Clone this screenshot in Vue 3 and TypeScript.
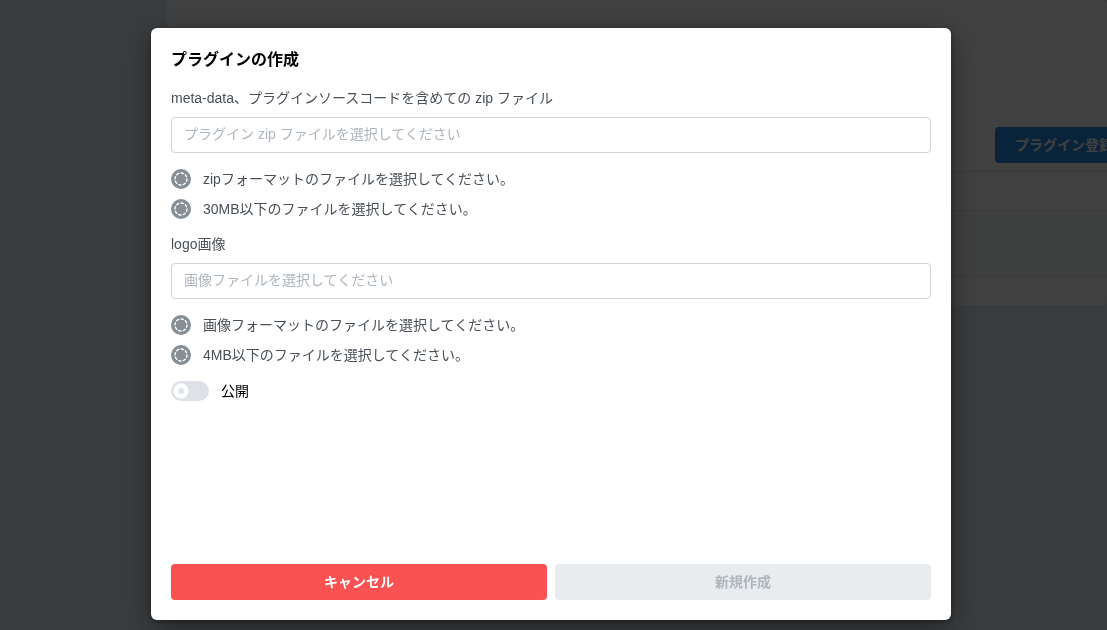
<script setup lang="ts">
import { ref } from 'vue'

interface FileField {
  id: string
  label: string
  placeholder: string
  rules: string[]
}

const fields: FileField[] = [
  {
    id: 'plugin-zip',
    label: 'meta-data、プラグインソースコードを含めての zip ファイル',
    placeholder: 'プラグイン zip ファイルを選択してください',
    rules: ['zipフォーマットのファイルを選択してください。', '30MB以下のファイルを選択してください。'],
  },
  {
    id: 'plugin-logo',
    label: 'logo画像',
    placeholder: '画像ファイルを選択してください',
    rules: ['画像フォーマットのファイルを選択してください。', '4MB以下のファイルを選択してください。'],
  },
]

const isPublic = ref(false)
</script>

<template>
  <div class="page">
    <main class="panel">
      <div class="toolbar">
        <button type="button" class="btn register">プラグイン登録</button>
      </div>
      <div class="row head"></div>
      <div class="row item"></div>
      <div class="row foot"></div>
    </main>
  </div>

  <div class="overlay">
    <form class="modal" role="dialog" aria-modal="true" aria-labelledby="modal-title" @submit.prevent>
      <h2 id="modal-title" class="title">プラグインの作成</h2>

      <section v-for="field in fields" :key="field.id" class="field">
        <label class="label" :for="field.id">{{ field.label }}</label>
        <input :id="field.id" class="input" type="text" readonly :placeholder="field.placeholder" />
        <ul class="rules">
          <li v-for="rule in field.rules" :key="rule" class="rule">
            <span class="rule-icon">
              <svg width="16" height="16" viewBox="0 0 24 24" fill="none" stroke="currentColor" stroke-width="2" stroke-linecap="round" stroke-linejoin="round" aria-hidden="true">
                <path d="M8.56 3.69a9 9 0 0 0-2.92 1.95" />
                <path d="M3.69 8.56a9 9 0 0 0-.69 3.44" />
                <path d="M3.69 15.44a9 9 0 0 0 1.95 2.92" />
                <path d="M8.56 20.31a9 9 0 0 0 3.44.69" />
                <path d="M15.44 20.31a9 9 0 0 0 2.92-1.95" />
                <path d="M20.31 15.44a9 9 0 0 0 .69-3.44" />
                <path d="M20.31 8.56a9 9 0 0 0-1.95-2.92" />
                <path d="M15.44 3.69a9 9 0 0 0-3.44-.69" />
              </svg>
            </span>
            <span>{{ rule }}</span>
          </li>
        </ul>
      </section>

      <label class="switch">
        <input v-model="isPublic" class="switch-input" type="checkbox" role="switch" />
        <span>公開</span>
      </label>

      <div class="actions">
        <button type="button" class="btn cancel">キャンセル</button>
        <button type="submit" class="btn create" disabled>新規作成</button>
      </div>
    </form>
  </div>
</template>

<style>
body {
  background: #e2eef6;
}
</style>

<style scoped>
.page,
.overlay {
  box-sizing: border-box;
  font-family: "Liberation Sans", "Noto Sans CJK JP", sans-serif;
  font-size: 14px;
  line-height: 20px;
}

.page {
  min-height: 100vh;
  padding-left: 167px;
  overflow: hidden;
}

.panel {
  background: #fff;
  border-radius: 4px;
}

.toolbar {
  display: flex;
  justify-content: flex-end;
  padding: 127px 0 8px;
  margin-right: -26px;
}

.row {
  border-top: 1px solid #dee2e6;
}

.head {
  height: 38px;
}

.item {
  height: 65px;
  background: #f8f9fa;
}

.foot {
  height: 28px;
}

.btn {
  height: 36px;
  padding: 0 20px;
  border: 0;
  border-radius: 4px;
  font: inherit;
  font-weight: 600;
  color: #fff;
  white-space: nowrap;
}

.register {
  background: #228be6;
}

.overlay {
  position: fixed;
  inset: 0;
  display: flex;
  align-items: flex-start;
  justify-content: center;
  padding: 28px 5px 10px 0;
  background: rgba(0, 0, 0, 0.75);
}

.modal {
  box-sizing: border-box;
  display: flex;
  flex-direction: column;
  width: 100%;
  max-width: 800px;
  height: 100%;
  padding: 20px;
  border-radius: 6px;
  background: #fff;
  color: #000;
  box-shadow: 0 2px 6px rgba(0, 0, 0, 0.3), 0 8px 28px rgba(0, 0, 0, 0.4);
}

.title {
  margin: 0 0 16px;
  font-size: 16px;
  line-height: 24px;
  font-weight: 700;
}

.field {
  display: flex;
  flex-direction: column;
  margin-bottom: 15px;
  color: #495057;
}

.label {
  margin-bottom: 8px;
  line-height: 21px;
}

.input {
  box-sizing: border-box;
  width: 100%;
  height: 36px;
  padding: 0 12px 2px;
  border: 1px solid #ced4da;
  border-radius: 4px;
  background: #fff;
  font: inherit;
  color: #000;
}

.input::placeholder {
  color: #adb5bd;
  opacity: 1;
}

.rules {
  display: flex;
  flex-direction: column;
  gap: 10px;
  margin: 16px 0 0;
  padding: 0;
  list-style: none;
}

.rule {
  display: flex;
  align-items: center;
  gap: 12px;
}

.rule-icon {
  display: flex;
  align-items: center;
  justify-content: center;
  width: 20px;
  height: 20px;
  border-radius: 50%;
  background: #868e96;
  color: #fff;
}

.switch {
  display: flex;
  align-items: center;
  align-self: flex-start;
  gap: 12px;
  line-height: 22px;
}

.switch-input {
  appearance: none;
  box-sizing: border-box;
  width: 38px;
  height: 20px;
  margin: 0;
  border-radius: 10px;
  background: radial-gradient(circle at 10px 10px, #dee2e6 2px, #fff 4px, #fff 7px, #dee2e6 8px);
}

.switch-input:checked {
  background: radial-gradient(circle at 28px 10px, #228be6 2px, #fff 4px, #fff 7px, #228be6 8px);
}

.actions {
  display: grid;
  grid-template-columns: 1fr 1fr;
  gap: 8px;
  margin-top: auto;
}

.cancel {
  background: #fa5252;
}

.create {
  background: #e9ecef;
  color: #adb5bd;
}
</style>
